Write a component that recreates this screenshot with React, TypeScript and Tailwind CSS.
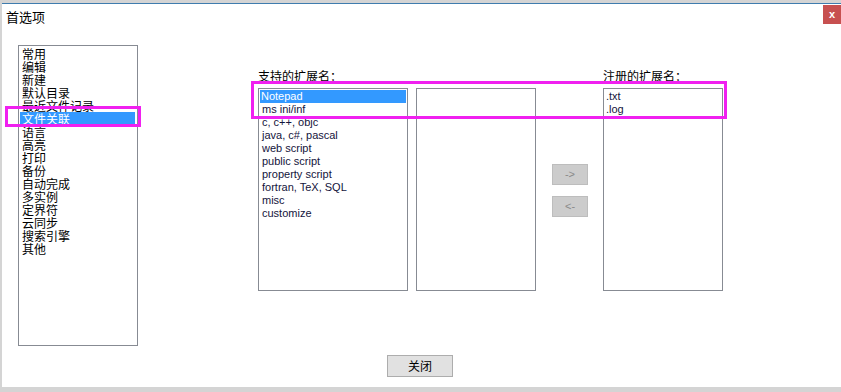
const sections = ['常用', '编辑', '新建', '默认目录', '最近文件记录', '文件关联', '语言', '高亮', '打印', '备份', '自动完成', '多实例', '定界符', '云同步', '搜索引擎', '其他']

const languages = ['Notepad', 'ms ini/inf', 'c, c++, objc', 'java, c#, pascal', 'web script', 'public script', 'property script', 'fortran, TeX, SQL', 'misc', 'customize']

const registered = ['.txt', '.log']

const cjk = "font-['Noto_Sans_CJK_SC','Noto_Sans',sans-serif]"
const latin = "font-['Liberation_Sans','Noto_Sans_CJK_SC',sans-serif]"

export default function App() {
  return (
    <div className="relative w-[841px] h-[392px] overflow-hidden bg-[#d4d4d4] pl-[2px] pt-[3px]">
      <div className="w-[839px] h-[384px] bg-white border-t border-[#3f7cae] flex flex-col">
        {/* title bar */}
        <div className="flex h-[22px] items-start justify-between">
          <div className={`${cjk} text-[13px] leading-[16px] text-black pl-[4px] pt-[5px]`}>首选项</div>
          <div className="w-[18px] h-[19px] mt-[1px] bg-[#c75050] flex items-center justify-center text-white text-[11px] font-bold font-['Liberation_Sans',sans-serif] leading-none">
            x
          </div>
        </div>

        <div className="flex pl-[16px] pt-[19px]">
          {/* left category list */}
          <div className={`${cjk} w-[120px] h-[301px] border border-[#878b93] pt-px pl-px pr-[2px] text-[12px] leading-[13px] text-black`}>
            {sections.map((s) => (
              <div key={s} className={s === '文件关联' ? 'bg-[#3399ff] text-white pl-[2px] h-[13px]' : 'pl-[2px] h-[13px]'}>
                {s}
              </div>
            ))}
          </div>

          {/* extension area */}
          <div className="flex ml-[120px]">
            <div className="flex flex-col">
              <div className={`${cjk} text-[12px] leading-[13px] h-[43px] pt-[24px] text-black`}>支持的扩展名：</div>
              <div className={`${latin} w-[150px] h-[203px] border border-[#878b93] p-px text-[11px] leading-[13px] text-[#14143c]`}>
                {languages.map((l) => (
                  <div key={l} className={l === 'Notepad' ? 'bg-[#3399ff] text-white pl-[1px] h-[13px]' : 'pl-[2px] h-[13px]'}>
                    {l}
                  </div>
                ))}
              </div>
            </div>

            <div className="w-[120px] h-[203px] border border-[#878b93] ml-[8px] mt-[43px]" />

            <div className="flex flex-col gap-[11px] ml-[16px] mt-[119px]">
              <div className={`${latin} w-[36px] h-[21px] bg-[#cccccc] border border-[#bdbdbd] flex items-center justify-center text-[11px] text-[#8a8a8a]`}>-&gt;</div>
              <div className={`${latin} w-[36px] h-[21px] bg-[#cccccc] border border-[#bdbdbd] flex items-center justify-center text-[11px] text-[#8a8a8a]`}>&lt;-</div>
            </div>

            <div className="flex flex-col ml-[15px]">
              <div className={`${cjk} text-[12px] leading-[13px] h-[43px] pt-[24px] text-black`}>注册的扩展名：</div>
              <div className={`${latin} w-[120px] h-[203px] border border-[#878b93] pt-px pl-[2px] text-[11px] leading-[13px] text-[#14143c]`}>
                {registered.map((r) => (
                  <div key={r} className="h-[13px]">{r}</div>
                ))}
              </div>
            </div>
          </div>
        </div>

        <div className="pl-[385px] pt-[9px]">
          <div className={`${cjk} w-[66px] h-[22px] bg-[#e1e1e1] border border-[#adadad] flex items-center justify-center text-[12px] text-black`}>关闭</div>
        </div>
      </div>

      {/* magenta annotation boxes */}
      <div className="absolute left-[5px] top-[106px] w-[136px] h-[21px] border-[3px] border-[#f020f0]" />
      <div className="absolute left-[251px] top-[81px] w-[476px] h-[38px] border-[3px] border-[#f020f0]" />
    </div>
  )
}
